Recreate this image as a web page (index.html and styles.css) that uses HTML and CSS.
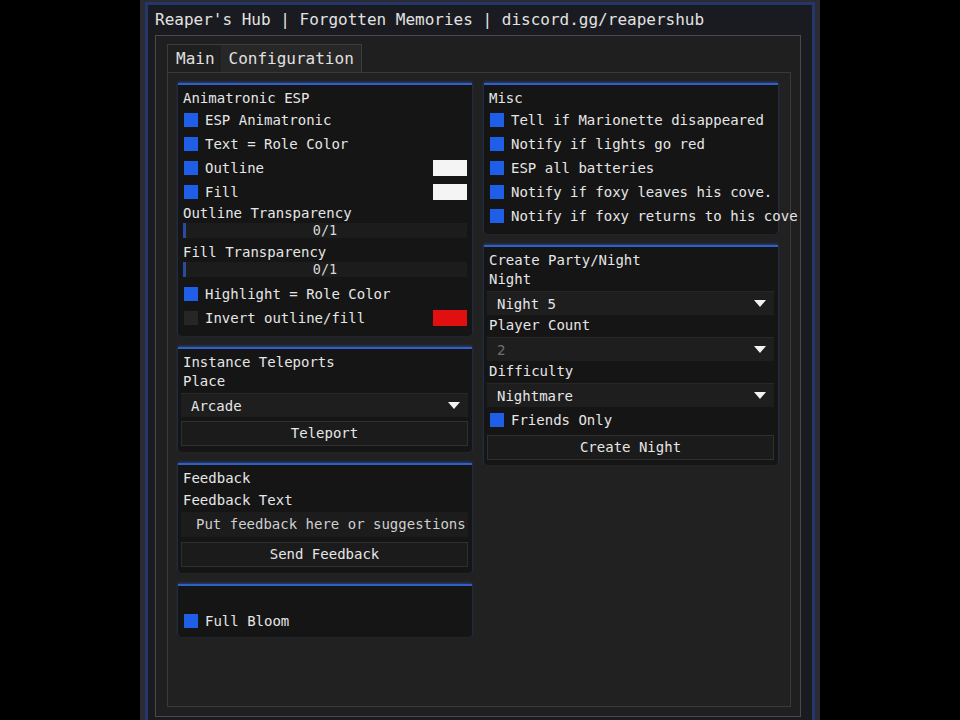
FILE: index.html
```html
<!DOCTYPE html>
<html lang="en">
<head>
  <meta charset="UTF-8">
  <meta name="viewport" content="width=device-width, initial-scale=1.0">
  <title>Reaper's Hub</title>
  <link rel="stylesheet" href="styles.css">
</head>
<body>
  <div class="window">
    <div class="frame">
      <div class="win-title">Reaper's Hub | Forgotten Memories | discord.gg/reapershub</div>
      <div class="panel">
        <div class="tabs">
          <span class="tab">Main</span>
          <span class="tab active">Configuration</span>
        </div>
        <div class="content">
          <div class="col">
            <div class="group">
              <div class="title">Animatronic ESP</div>
              <div class="row"><span class="box"></span>ESP Animatronic</div>
              <div class="row"><span class="box"></span>Text = Role Color</div>
              <div class="row"><span class="box"></span>Outline<span class="swatch"></span></div>
              <div class="row"><span class="box"></span>Fill<span class="swatch"></span></div>
              <div class="label">Outline Transparency</div>
              <div class="slider"><span class="fill"></span>0/1</div>
              <div class="label">Fill Transparency</div>
              <div class="slider"><span class="fill"></span>0/1</div>
              <div class="row"><span class="box"></span>Highlight = Role Color</div>
              <div class="row"><span class="box off"></span>Invert outline/fill<span class="swatch red"></span></div>
            </div>

            <div class="group">
              <div class="title">Instance Teleports</div>
              <div class="label">Place</div>
              <div class="select">Arcade<span class="arrow"></span></div>
              <div class="button">Teleport</div>
            </div>

            <div class="group">
              <div class="title">Feedback</div>
              <div class="label gap">Feedback Text</div>
              <div class="input">Put feedback here or suggestions</div>
              <div class="button">Send Feedback</div>
            </div>

            <div class="group last">
              <div class="title"></div>
              <div class="row"><span class="box"></span>Full Bloom</div>
            </div>
          </div>

          <div class="col right">
            <div class="group">
              <div class="title">Misc</div>
              <div class="row"><span class="box"></span>Tell if Marionette disappeared</div>
              <div class="row"><span class="box"></span>Notify if lights go red</div>
              <div class="row"><span class="box"></span>ESP all batteries</div>
              <div class="row"><span class="box"></span>Notify if foxy leaves his cove.</div>
              <div class="row"><span class="box"></span>Notify if foxy returns to his cove</div>
            </div>

            <div class="group party">
              <div class="title">Create Party/Night</div>
              <div class="label">Night</div>
              <div class="select">Night 5<span class="arrow"></span></div>
              <div class="label">Player Count</div>
              <div class="select dim">2<span class="arrow"></span></div>
              <div class="label">Difficulty</div>
              <div class="select">Nightmare<span class="arrow"></span></div>
              <div class="row"><span class="box"></span>Friends Only</div>
              <div class="button">Create Night</div>
            </div>
          </div>
        </div>
      </div>
    </div>
  </div>
</body>
</html>
```

FILE: styles.css
```css
* {margin:0; padding:0; box-sizing:border-box;}
html, body {height:720px; overflow:hidden;}
body {background:#000; display:flex; justify-content:center; font-family:"DejaVu Sans Mono", "Liberation Mono", monospace; font-size:14px; color:#e6e6e6;}

.window {width:680px; height:720px; padding:2px 5px 0 5px; background:#2a2c31;}
.frame {display:flex; flex-direction:column; height:100%; border:3px solid #25366c; border-bottom:0; background:#1a1b20;}
.win-title {height:30px; line-height:30px; padding-left:7px; font-size:16px; color:#e2e2e2; white-space:nowrap;}

.panel {flex:1; display:flex; flex-direction:column; margin:0 11px 3px 7px; padding:8px 9px 9px 11px; border:1px solid #4a4a4a; background:#1f1f1f;}
.tabs {display:flex; align-self:flex-start; height:28px; border:1px solid #3c3c3c; border-bottom:0; font-size:16px; line-height:27px;}
.tab {padding:0 6px 0 8px; color:#e0e0e0;}
.tab.active {padding:0 7px 0 8px; background:#272727;}

.content {flex:1; display:grid; grid-template-columns:294px 294px; column-gap:12px; align-items:start; padding:10px; border:1px solid #3a3a3a; background:#212121;}
.col {display:flex; flex-direction:column; gap:11px;}

.group {padding:3px 4px 6px 3px; border-top:2px solid #2e60c8; box-shadow:0 -1px 3px rgba(50, 100, 220, 0.45); background:#151515; border-radius:0 0 4px 4px; white-space:nowrap;}
.group.last {padding-bottom:4px;}
.group.party {padding-bottom:5px;}
.title {height:20px; line-height:20px; padding-left:2px;}
.label {height:18px; line-height:18px; padding-left:2px;}
.label.gap {margin-top:3px;}
.select + .label {margin-top:1px;}

.row {display:flex; align-items:center; gap:7px; height:24px; padding-left:3px;}
.box {width:14px; height:14px; background:#1f5fe8; flex:none;}
.box.off {background:#262626;}
.swatch {margin-left:auto; margin-right:1px; width:34px; height:16px; background:#f4f4f4;}
.swatch.red {background:#e01010;}
.party .row {margin-top:1px;}
.party .button {margin-top:3px;}

.slider {position:relative; height:15px; margin:1px 1px 5px 2px; background:#1c1c1c; font-size:13.5px; line-height:15px; text-align:center; color:#d8d8d8;}
.slider .fill {position:absolute; left:0; top:0; width:3px; height:100%; background:#2b4a9e;}

.select {display:flex; align-items:center; height:24px; margin-top:3px; padding:0 8px 0 10px; background:#1e1e1e; border-top:1px solid #272727;}
.select.dim {color:#6e6e6e;}
.arrow {margin-left:auto; width:0; height:0; border-left:6.5px solid transparent; border-right:6.5px solid transparent; border-top:7px solid #f2f2f2;}

.button {height:25px; margin-top:4px; line-height:23px; text-align:center; border:1px solid #2f2f2f; background:#1b1b1b;}
.input {height:25px; margin-top:3px; padding-left:15px; line-height:25px; background:#1c1c1c; color:#cfcfcf; overflow:hidden;}
.input + .button {margin-top:5px;}
```
